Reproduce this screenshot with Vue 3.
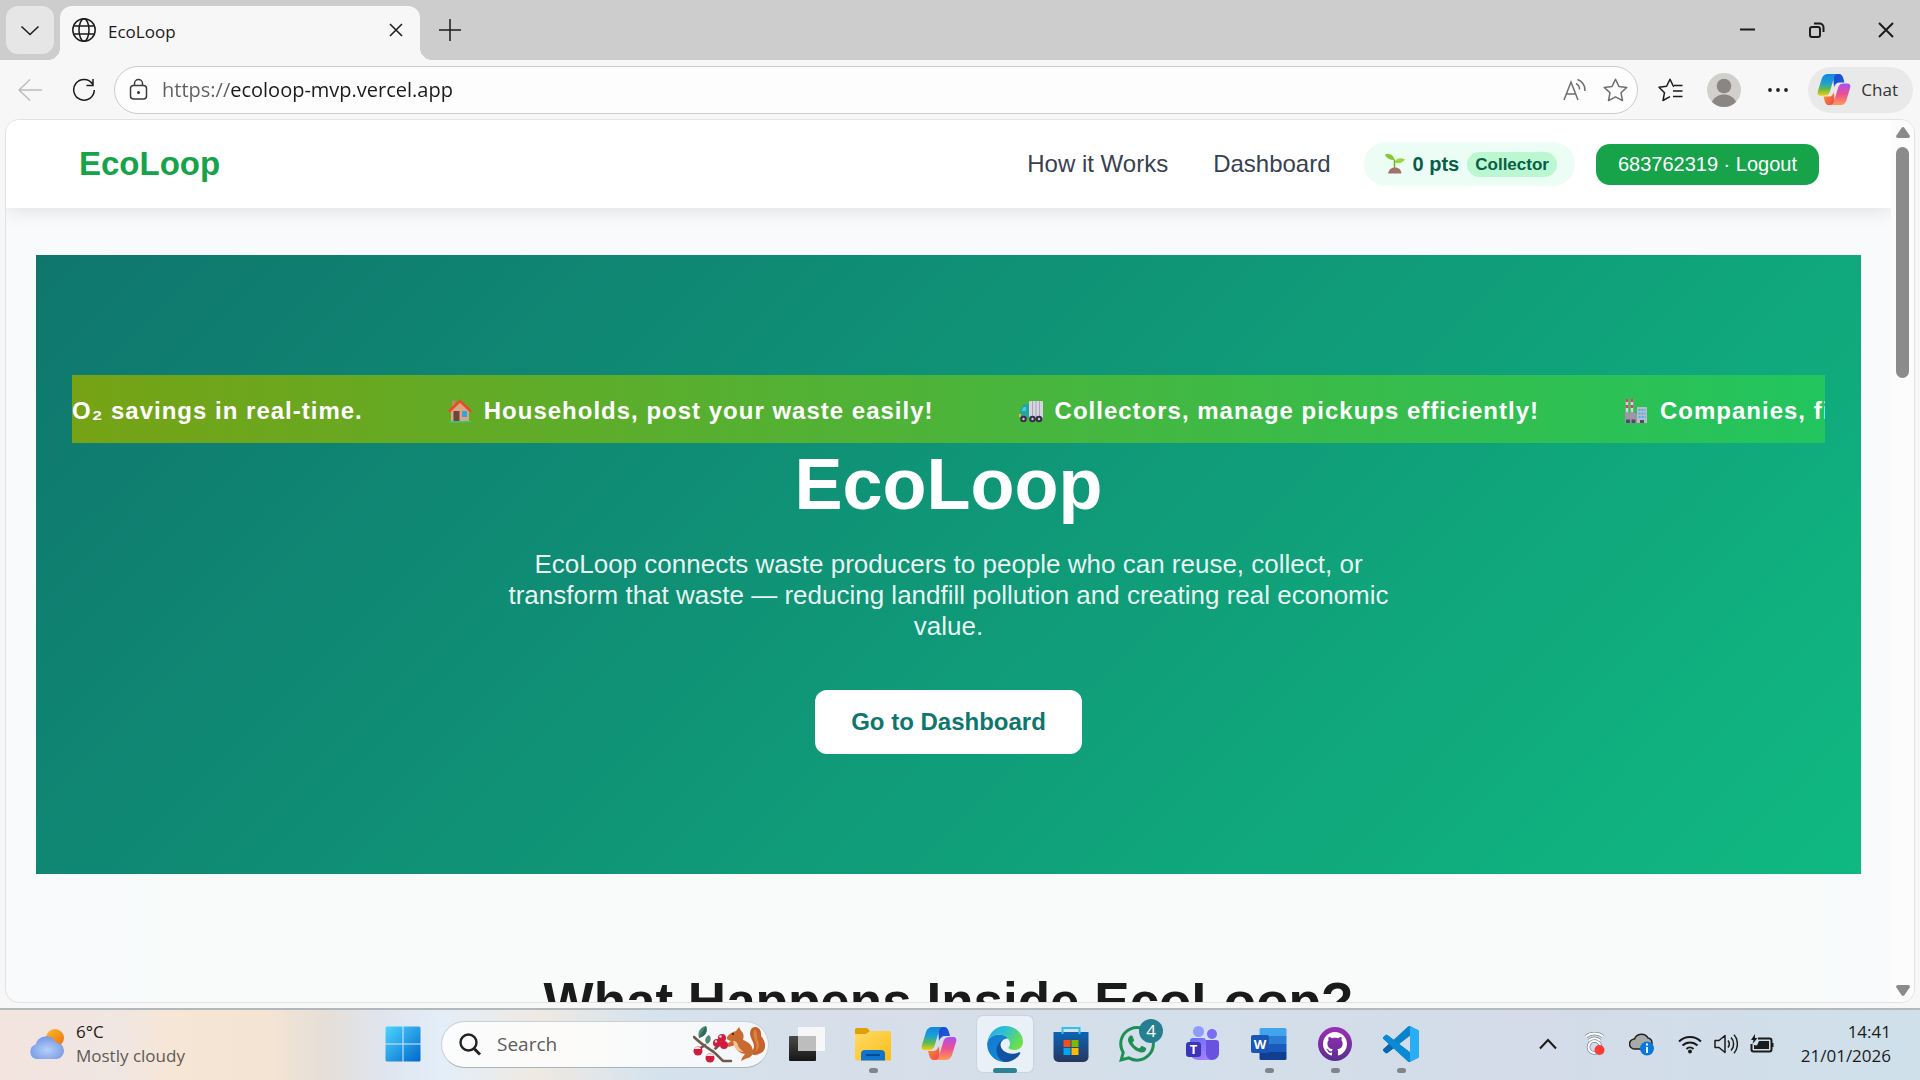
<script setup>
import { ref } from 'vue'

const url = ref('https://ecoloop-mvp.vercel.app')
const query = ref('')

const links = [
    { label: 'How it Works', href: '#how' },
    { label: 'Dashboard', href: '#dashboard' }
]

const apps = [
    { name: 'Task view', icon: 'taskview' },
    { name: 'File Explorer', icon: 'folder', running: true },
    { name: 'Copilot', icon: 'copilot' },
    { name: 'Edge', icon: 'edge', active: true },
    { name: 'Store', icon: 'store' },
    { name: 'WhatsApp', icon: 'whatsapp', badge: 4 },
    { name: 'Teams', icon: 'teams' },
    { name: 'Word', icon: 'word', running: true },
    { name: 'GitHub Desktop', icon: 'github', running: true },
    { name: 'VS Code', icon: 'vscode', running: true }
]
</script>

<template>
    <div class="desktop">
        <svg class="symbols" aria-hidden="true">
            <defs>
                <linearGradient id="g-cop-a" x1="0" y1="0" x2="0" y2="1">
                    <stop offset="0" stop-color="#1288e0" />
                    <stop offset=".4" stop-color="#1b9fd8" />
                    <stop offset=".7" stop-color="#5fba4b" />
                    <stop offset="1" stop-color="#f7cb12" />
                </linearGradient>
                <linearGradient id="g-cop-b" x1="0" y1="0" x2="0" y2="1">
                    <stop offset="0" stop-color="#a94ff0" />
                    <stop offset=".5" stop-color="#ee5091" />
                    <stop offset="1" stop-color="#ff9b52" />
                </linearGradient>
                <linearGradient id="g-cop-c" x1="0" y1="0" x2="1" y2="1">
                    <stop offset="0" stop-color="#1a49c8" />
                    <stop offset="1" stop-color="#1b5fe2" />
                </linearGradient>
                <linearGradient id="g-cop-d" x1="0" y1="0" x2="1" y2="1">
                    <stop offset="0" stop-color="#fb9a2b" />
                    <stop offset="1" stop-color="#ef3f4f" />
                </linearGradient>
                <linearGradient id="g-start" x1="0" y1="0" x2="1" y2="1">
                    <stop offset="0" stop-color="#4fd5ff" />
                    <stop offset="1" stop-color="#0067cc" />
                </linearGradient>
                <linearGradient id="g-dark" x1="0" y1="0" x2="0" y2="1">
                    <stop offset="0" stop-color="#4a4a4a" />
                    <stop offset="1" stop-color="#161616" />
                </linearGradient>
                <linearGradient id="g-folder" x1="0" y1="0" x2="1" y2="1">
                    <stop offset="0" stop-color="#ffdc6b" />
                    <stop offset="1" stop-color="#fcbc12" />
                </linearGradient>
                <linearGradient id="g-edge-a" x1="0" y1="0" x2="1" y2=".5">
                    <stop offset="0" stop-color="#2aa4e6" />
                    <stop offset=".5" stop-color="#2fc2cf" />
                    <stop offset="1" stop-color="#6be04a" />
                </linearGradient>
                <linearGradient id="g-edge-b" x1="0" y1="0" x2="1" y2="1">
                    <stop offset="0" stop-color="#1579c8" />
                    <stop offset="1" stop-color="#0f8fe8" />
                </linearGradient>
                <linearGradient id="g-store" x1="0" y1="0" x2="0" y2="1">
                    <stop offset="0" stop-color="#0a64b6" />
                    <stop offset="1" stop-color="#28365e" />
                </linearGradient>
                <linearGradient id="g-teams" x1="0" y1="0" x2="1" y2="1">
                    <stop offset="0" stop-color="#5b6cf0" />
                    <stop offset="1" stop-color="#b784ff" />
                </linearGradient>
                <linearGradient id="g-github" x1="0" y1="0" x2="0" y2="1">
                    <stop offset="0" stop-color="#9b2fb5" />
                    <stop offset="1" stop-color="#5a2d91" />
                </linearGradient>
                <linearGradient id="g-sun" x1="0" y1="0" x2="1" y2="1">
                    <stop offset="0" stop-color="#f5be2c" />
                    <stop offset="1" stop-color="#f26c0c" />
                </linearGradient>
                <radialGradient id="g-cloud" cx=".5" cy=".6" r=".6">
                    <stop offset="0" stop-color="#b6d0fa" />
                    <stop offset="1" stop-color="#7398e4" />
                </radialGradient>
            </defs>
            <symbol id="copilot" viewBox="0 0 36 36">
                <path fill="url(#g-cop-c)" d="M17 1H23c3 0 4 2 5 5l1 4h-5c-3 0-5 2-6 5z" />
                <path fill="url(#g-cop-d)" d="M19 34H13c-3 0-4-2-5-5l-1-4h5c3 0 5-2 6-5z" />
                <path fill="url(#g-cop-a)" d="M12 1H23c-3 0-4 1-5 4L13.500 20c-1 3-3 4-6 4H4C1 24 0 22 1 19L5 6C6 3 8 1 12 1z" />
                <path fill="url(#g-cop-b)" d="M24 34H13c3 0 4-1 5-4l4.500-15c1-3 3-4 6-4h3.500c3 0 4 2 3 5l-4 13c-1 3-3 5-7 5z" />
            </symbol>
        </svg>

        <div class="browser">
            <header class="tab-bar">
                <button class="tab-menu" aria-label="Tab actions">
                    <svg width="20" height="20" viewBox="0 0 20 20"><path class="line" d="M1.500 6.500l8.500 8 8.500-8" /></svg>
                </button>
                <div class="tab">
                    <svg width="24" height="24" viewBox="0 0 24 24">
                        <g class="line">
                            <circle cx="12" cy="12" r="11.200" />
                            <ellipse cx="12" cy="12" rx="5" ry="11.200" />
                            <path d="M1.500 8h21M1.500 16h21" />
                        </g>
                    </svg>
                    <span class="tab-title">EcoLoop</span>
                    <button class="plain" aria-label="Close tab">
                        <svg width="14" height="14" viewBox="0 0 14 14"><path class="line" d="M1 1l12 12M13 1L1 13" /></svg>
                    </button>
                </div>
                <button class="plain new-tab" aria-label="New tab">
                    <svg width="22" height="22" viewBox="0 0 22 22"><path class="line" d="M11 0v22M0 11h22" /></svg>
                </button>
                <div class="window-controls">
                    <button class="plain" aria-label="Minimize">
                        <svg width="16" height="16" viewBox="0 0 16 16"><path class="line bold" d="M0 7.500h15" /></svg>
                    </button>
                    <button class="plain" aria-label="Restore">
                        <svg width="16" height="16" viewBox="0 0 16 16">
                            <rect class="line bold" x="1" y="5" width="10" height="10" rx="2" />
                            <path class="line bold" d="M5 1.500h5.500a4 4 0 0 1 4 4V10" />
                        </svg>
                    </button>
                    <button class="plain" aria-label="Close">
                        <svg width="16" height="16" viewBox="0 0 16 16"><path class="line bold" d="M1 1l14 14M15 1L1 15" /></svg>
                    </button>
                </div>
            </header>

            <div class="toolbar">
                <button class="plain tool" aria-label="Back">
                    <svg width="24" height="24" viewBox="0 0 24 24"><path class="line pale" d="M24 12H1M12 1.500L1 12l11 10.500" /></svg>
                </button>
                <button class="plain tool reload" aria-label="Reload">
                    <svg width="24" height="24" viewBox="0 0 24 24"><path class="line" d="M20.500 6A10.300 10.300 0 1 0 22.300 12M21 1v6.500h-6.500" /></svg>
                </button>
                <form class="address" @submit.prevent>
                    <svg width="20" height="24" viewBox="0 0 20 24">
                        <g class="line soft">
                            <rect x="1.500" y="7.500" width="16" height="13.500" rx="3" />
                            <path d="M5.500 7.500V5.500a4 4 0 0 1 8 0v2" />
                        </g>
                        <circle cx="9.500" cy="14.500" r="1.500" fill="#333" />
                    </svg>
                    <input v-model="url" class="address-input" type="text" aria-label="Address">
                    <button class="plain" type="button" aria-label="Read aloud">
                        <svg width="24" height="24" viewBox="0 0 24 24"><path class="line grey" d="M1 22L8 4l7 18M3.500 16h9M13 5.500c2 1 3.500 3 3.500 6M14.500 1.500c4.500 1.500 8 6 7.500 11.500" /></svg>
                    </button>
                    <button class="plain" type="button" aria-label="Add to favorites">
                        <svg width="25" height="24" viewBox="0 0 25 24"><path class="line grey" stroke-linejoin="round" d="M12.500 1.200l3.400 7.200 7.900 1-5.800 5.400 1.500 7.800-7-3.800-7 3.800L7 14.800 1.200 9.400l7.900-1z" /></svg>
                    </button>
                </form>
                <button class="plain tool" aria-label="Favorites">
                    <svg width="25" height="24" viewBox="0 0 25 24">
                        <path class="line" stroke-linejoin="round" d="M16 8.400l-.6-.1L12 1.200 8.600 8.300l-7.600 1 5.500 5.400L5 22.500l7-3.800M16 7.500h8.500M15 13h9.500M15 18.500h9.500" />
                    </svg>
                </button>
                <button class="plain tool" aria-label="Profile">
                    <svg width="34" height="34" viewBox="0 0 34 34">
                        <circle cx="17" cy="17" r="17" fill="#d2d0cd" />
                        <circle cx="17" cy="13" r="7.300" fill="#8a8684" />
                        <path fill="#8a8684" d="M5 29c2-5 7-7.500 12-7.500S27 24 29 29a17 17 0 0 1-24 0z" />
                    </svg>
                </button>
                <button class="plain tool" aria-label="Settings and more">
                    <svg width="20" height="6" viewBox="0 0 20 6" fill="#222"><circle cx="2" cy="3" r="1.900" /><circle cx="10" cy="3" r="1.900" /><circle cx="18" cy="3" r="1.900" /></svg>
                </button>
                <button class="chat">
                    <svg width="34" height="34"><use href="#copilot" /></svg>
                    <span>Chat</span>
                </button>
            </div>

            <div class="viewport">
                <div class="page">
                    <nav class="navbar">
                        <a class="logo" href="#">EcoLoop</a>
                        <div class="nav-links">
                            <a v-for="link in links" :key="link.href" :href="link.href">{{ link.label }}</a>
                        </div>
                        <div class="points">
                            <svg width="20" height="20" viewBox="0 0 20 20">
                                <path fill="#a1716b" d="M3 19.500C4 15 7 13.500 10 13.500s6 1.500 6.500 6z" />
                                <path fill="none" stroke="#6fae2c" stroke-width="1.500" d="M9.500 14V5.500" />
                                <path fill="#86c935" d="M0 .5C5-1 9 1.500 9.500 6 5 6 1.500 4.500 0 .5z" />
                                <path fill="#9bd83f" d="M9.500 8.500C11 4.500 15 3 20 5.500c-2 3.500-7 4.500-10.500 3z" />
                            </svg>
                            <span>0 pts</span>
                            <span class="role">Collector</span>
                        </div>
                        <button class="logout">683762319 · Logout</button>
                    </nav>

                    <section class="hero">
                        <div class="marquee">
                            <span class="marquee-item">O₂ savings in real-time.</span>
                            <span class="marquee-item">
                                <svg width="24" height="24" viewBox="0 0 24 24">
                                    <path fill="#b98b63" d="M4 1.500h3.500V8H4z" />
                                    <path fill="#dca57c" d="M3 10l9-8 9 8v12H3z" />
                                    <path fill="none" stroke="#e8492f" stroke-width="2.500" stroke-linecap="round" d="M1.500 12L12 2l10.500 10" />
                                    <rect x="5.500" y="12" width="6" height="10" fill="#6d4540" />
                                    <rect x="14" y="12" width="5" height="6" fill="#2ea5e8" />
                                    <path fill="#35c68b" d="M1 22h22v1.500H1z" />
                                </svg>
                                Households, post your waste easily!
                            </span>
                            <span class="marquee-item">
                                <svg width="24" height="24" viewBox="0 0 24 24">
                                    <rect x="10" y="2" width="14" height="17" rx="1" fill="#d7d3df" />
                                    <path stroke="#a9a4b7" d="M13.500 2v16M17 2v16M20.500 2v16" />
                                    <path fill="#26a69a" d="M2 9l3-4h5v14H1v-6z" />
                                    <path fill="#44c8ef" d="M2.500 12l2-4H7v4z" />
                                    <path fill="#e9b93b" d="M0 15h2v3H0z" />
                                    <g fill="#3a2f4a"><circle cx="4.500" cy="20" r="3.300" /><circle cx="13.500" cy="20" r="3.300" /><circle cx="20" cy="20" r="3.300" /></g>
                                    <g fill="#c8c3d4"><circle cx="4.500" cy="20" r="1.200" /><circle cx="13.500" cy="20" r="1.200" /><circle cx="20" cy="20" r="1.200" /></g>
                                </svg>
                                Collectors, manage pickups efficiently!
                            </span>
                            <span class="marquee-item">
                                <svg width="24" height="24" viewBox="0 0 24 24">
                                    <path stroke="#d9d5e0" stroke-width="2.500" d="M3 0v14M8 0v14" />
                                    <path stroke="#e03a6c" stroke-width="2.500" stroke-dasharray="3 3" d="M3 0v12M8 0v12" />
                                    <path fill="#9c97a8" d="M1 12l5 2.500V12l7 3v9H1z" />
                                    <rect x="13" y="8" width="10" height="16" fill="#bdb9c8" />
                                    <path stroke="#3fb7f0" stroke-width="2" stroke-dasharray="2 1" d="M14.500 11h7M14.500 14.500h7M14.500 18h7" />
                                    <path fill="#52485f" d="M2 20.500h4V24H2zM7.500 20.500h4V24h-4zM16 21h4v3h-4z" />
                                </svg>
                                Companies, fi
                            </span>
                        </div>
                        <h1>EcoLoop</h1>
                        <p>EcoLoop connects waste producers to people who can reuse, collect, or transform that waste — reducing landfill pollution and creating real economic value.</p>
                        <button class="cta">Go to Dashboard</button>
                    </section>

                    <section class="inside">
                        <h2>What Happens Inside EcoLoop?</h2>
                    </section>
                </div>
                <div class="scrollbar" aria-hidden="true">
                    <svg width="14" height="11" viewBox="0 0 14 11"><path fill="#8b8b8b" d="M5.500 1Q7-1 8.500 1L14 9q0 2-2 2H2Q0 11 0 9z" /></svg>
                    <div class="thumb"></div>
                    <svg class="arrow-down" width="14" height="11" viewBox="0 0 14 11"><path fill="#8b8b8b" d="M5.500 10Q7 12 8.500 10L14 2q0-2-2-2H2Q0 0 0 2z" /></svg>
                </div>
            </div>
        </div>

        <footer class="taskbar">
            <div class="weather">
                <svg width="36" height="32" viewBox="0 0 36 32">
                    <circle cx="26" cy="10" r="9" fill="url(#g-sun)" />
                    <path fill="url(#g-cloud)" d="M7.500 31A7.500 7.500 0 0 1 6.500 16.500 11 11 0 0 1 27 14.500a8.300 8.300 0 0 1 1 16.500z" />
                </svg>
                <div class="weather-text">
                    <span>6°C</span>
                    <span class="muted">Mostly cloudy</span>
                </div>
            </div>

            <button class="task" aria-label="Start">
                <svg width="36" height="36" viewBox="0 0 36 36"><path fill="url(#g-start)" d="M2 .5h15.500v17H.5V2A1.500 1.500 0 0 1 2 .5zM18.500.5H34A1.500 1.500 0 0 1 35.500 2v15.500h-17zM.5 18.500h17v17H2A1.500 1.500 0 0 1 .5 34zM18.500 18.500h17V34a1.500 1.500 0 0 1-1.500 1.500H18.500z" /></svg>
            </button>

            <label class="search">
                <svg width="22" height="23" viewBox="0 0 22 23"><g fill="none" stroke="#222" stroke-width="2.400"><circle cx="9.500" cy="9.500" r="8" /><path stroke-width="3" d="M15.500 16l5.500 5.500" /></g></svg>
                <input v-model="query" type="text" placeholder="Search" aria-label="Search">
                <svg width="72" height="38" viewBox="0 0 72 38">
                    <path fill="none" stroke="#6f5a4c" stroke-width="2.500" stroke-linecap="round" d="M1 12c7 7 14 11 21 16l8 8h8M12 20l-7 5M20 26l6-6" />
                    <path fill="none" stroke="#f1f4f8" stroke-width="1.500" d="M13 18l11 9 8 6" />
                    <path fill="#4f8a72" d="M6 13C4 6 8 2 13 1c2 5 0 10-7 12zM14 19c-3-3-2-7 2-9 3 3 2 7-2 9z" />
                    <path fill="#2f6b57" d="M6 13c2-4 4-8 7-12 2 5 0 10-7 12z" />
                    <path fill="#c4622a" d="M59 3c5-3 10 1 9 8 5 6 6 13 0 17-5 3-9 2-12 0 5-2 6-6 4-11-2-4-5-9-1-14z" />
                    <path fill="#dd8442" d="M62 4c3 4 1 8 3 12 2 5 1 8-3 11 2-4 2-8 0-12-2-5-2-8 0-11z" />
                    <path fill="#c96a30" d="M43 6l3-4 2 4c3 2 3 6 2 9 6 2 10 6 10 12 0 4-4 6-8 7l-4 2 1-3 3-4c-6-1-9-4-10-9l-6 2-3-2 5-4c-2-1-5-1-4-4 2-3 5-5 9-6z" />
                    <path fill="#f0c494" d="M40 16c3 0 5 2 5 5 2 3 4 5 6 6-6 0-9-3-10-7z" />
                    <circle cx="40" cy="9" r="1" fill="#2a1610" />
                    <g fill="#cf1c3c"><circle cx="29" cy="13" r="4" /><circle cx="24" cy="18" r="4" /><circle cx="31" cy="20" r="4" /><circle cx="5" cy="26" r="4.500" /><circle cx="17" cy="33" r="4.500" /></g>
                    <g fill="#f6dfe6"><circle cx="27.500" cy="11.500" r="1.200" /><circle cx="23" cy="16.500" r="1.200" /><path d="M1 24c1-3 6-3 7 0zM13 31c1-3 7-3 8 0z" /></g>
                </svg>
            </label>

            <button v-for="app in apps" :key="app.icon" class="task" :class="{ active: app.active, running: app.running }" :aria-label="app.name">
                <svg v-if="app.icon === 'taskview'" width="36" height="36" viewBox="0 0 36 36">
                    <rect y="10" width="27" height="25" rx="1" fill="url(#g-dark)" />
                    <rect x="9" y="1" width="27" height="24" rx="1" fill="#f7f7f7" />
                    <path fill="#bdbdbd" d="M9 10h18v15H10a1 1 0 0 1-1-1z" />
                </svg>
                <svg v-else-if="app.icon === 'folder'" width="36" height="36" viewBox="0 0 36 36">
                    <path fill="#e0a009" d="M1.500 2H12l3 3v4H0V3.500A1.500 1.500 0 0 1 1.500 2z" />
                    <path fill="url(#g-folder)" d="M0 8h11l4-3h19.500A1.500 1.500 0 0 1 36 6.500V33a1.500 1.500 0 0 1-1.500 1.500h-33A1.500 1.500 0 0 1 0 33z" />
                    <path fill="#0f74cc" d="M6 34.500V28a4 4 0 0 1 4-4h16a4 4 0 0 1 4 4v6.500z" />
                    <path stroke="#0a4a8c" stroke-width="2" d="M11 29h14" />
                </svg>
                <svg v-else-if="app.icon === 'copilot'" width="36" height="36"><use href="#copilot" /></svg>
                <svg v-else-if="app.icon === 'edge'" width="36" height="36" viewBox="0 0 36 36">
                    <path fill="url(#g-edge-b)" d="M.2 17C1.500 12 6 8.500 12 8.500c4 0 7.500 1.500 9.500 4C16 12 13 16 13 20c0 7 6 10 13 10-2 4-6 6-9 6C8 35.500-.5 28 .2 17z" />
                    <path fill="#1153a0" d="M17 13.500C12.500 15 9.500 19 9.500 24c0 6 4 11.500 9 12 6 0 11.500-3 14.700-8.500.6-1-.3-1.700-1.300-1.200-2 1-4 1.500-6.400 1.500-7 0-12-4.500-12-9.300 0-2.200 1.500-4 3.500-5z" />
                    <path fill="url(#g-edge-a)" d="M.2 17C1.500 7 9 0 18 0c10.500 0 18 7.500 18 15.500C36 21 32 24 27.500 24c-4 0-6-1.200-6-2.200 0-.8 1.500-1.800 1.500-4.300 0-4.500-5-9-11-9S1.500 12.500.2 17z" />
                </svg>
                <svg v-else-if="app.icon === 'store'" width="36" height="36" viewBox="0 0 36 36">
                    <path fill="url(#g-store)" d="M.5 6h35v25a5 5 0 0 1-5 5h-25a5 5 0 0 1-5-5z" />
                    <path fill="none" stroke="#2cc3f2" stroke-width="2" d="M9.500 8V2h17v6" />
                    <path fill="#f25022" d="M10.500 14h7v7h-7z" />
                    <path fill="#7fba00" d="M18.500 14h7v7h-7z" />
                    <path fill="#00a4ef" d="M10.500 22h7v7h-7z" />
                    <path fill="#ffb900" d="M18.500 22h7v7h-7z" />
                </svg>
                <svg v-else-if="app.icon === 'whatsapp'" width="36" height="36" viewBox="0 0 24 24">
                    <path fill="#1f8f55" d="M17.472 14.382c-.297-.149-1.758-.867-2.030-.967-.273-.099-.471-.148-.67.15-.197.297-.767.966-.94 1.164-.173.199-.347.223-.644.075-.297-.15-1.255-.463-2.390-1.475-.883-.788-1.480-1.761-1.653-2.059-.173-.297-.018-.458.13-.606.134-.133.298-.347.446-.52.149-.174.198-.298.298-.497.099-.198.05-.371-.025-.52-.075-.149-.669-1.612-.916-2.207-.242-.579-.487-.5-.669-.51-.173-.008-.371-.01-.57-.01-.198 0-.52.074-.792.372-.272.297-1.040 1.016-1.040 2.479 0 1.462 1.065 2.875 1.213 3.074.149.198 2.096 3.200 5.077 4.487.709.306 1.262.489 1.694.625.712.227 1.360.195 1.871.118.571-.085 1.758-.719 2.006-1.413.248-.694.248-1.289.173-1.413-.074-.124-.272-.198-.57-.347m-5.421 7.403h-.004a9.870 9.870 0 0 1-5.031-1.378l-.361-.214-3.741.982.998-3.648-.235-.374a9.860 9.860 0 0 1-1.510-5.260c.001-5.450 4.436-9.884 9.888-9.884 2.640 0 5.122 1.030 6.988 2.898a9.825 9.825 0 0 1 2.893 6.994c-.003 5.450-4.437 9.884-9.885 9.884m8.413-18.297A11.815 11.815 0 0 0 12.050 0C5.495 0 .16 5.335.157 11.892c0 2.096.547 4.142 1.588 5.945L.057 24l6.305-1.654a11.882 11.882 0 0 0 5.683 1.448h.005c6.554 0 11.890-5.335 11.893-11.893a11.821 11.821 0 0 0-3.480-8.413z" />
                </svg>
                <svg v-else-if="app.icon === 'teams'" width="36" height="36" viewBox="0 0 36 36">
                    <circle cx="27" cy="8" r="5" fill="#7a6cf5" />
                    <circle cx="13.500" cy="5.500" r="5.500" fill="#8f9bff" />
                    <path fill="#6a52e0" d="M20 14h11a3 3 0 0 1 3 3v10c0 4-3 7-7 7h-7z" />
                    <path fill="url(#g-teams)" d="M8 12h10a3 3 0 0 1 3 3v12c0 3 2 7 6 7H14c-5 0-9-3-9-8V15a3 3 0 0 1 3-3z" />
                    <rect x="1" y="16" width="15" height="15" rx="3" fill="#3d35b8" />
                    <text x="8.500" y="28" class="app-letter">T</text>
                </svg>
                <svg v-else-if="app.icon === 'word'" width="36" height="36" viewBox="0 0 36 36">
                    <path fill="#41a5ee" d="M10 2h24a1.500 1.500 0 0 1 1.500 1.500V10h-27V3.500A1.500 1.500 0 0 1 10 2z" />
                    <path fill="#2b7cd3" d="M8.500 10h27v8h-27z" />
                    <path fill="#185abd" d="M8.500 18h27v8h-27z" />
                    <path fill="#103f91" d="M8.500 26h27v6.500A1.500 1.500 0 0 1 34 34H10a1.500 1.500 0 0 1-1.500-1.500z" />
                    <rect y="9" width="18" height="18" rx="2" fill="#1a55b8" />
                    <text x="9" y="23" class="app-letter">W</text>
                </svg>
                <svg v-else-if="app.icon === 'github'" width="36" height="36" viewBox="0 0 36 36">
                    <circle cx="18" cy="18" r="17" fill="url(#g-github)" />
                    <path fill="#fff" transform="translate(6 6) scale(1.500)" d="M8 0C3.580 0 0 3.580 0 8c0 3.540 2.290 6.530 5.470 7.590.4.07.55-.17.55-.38 0-.19-.01-.82-.01-1.490-2.010.37-2.530-.49-2.690-.94-.09-.23-.48-.94-.82-1.130-.28-.15-.68-.52-.01-.53.63-.01 1.080.58 1.230.82.72 1.210 1.870.87 2.330.66.07-.52.28-.87.51-1.070-1.780-.2-3.640-.89-3.640-3.950 0-.87.31-1.590.82-2.150-.08-.2-.36-1.020.08-2.120 0 0 .67-.21 2.200.82.64-.18 1.320-.27 2-.27s1.360.09 2 .27c1.530-1.040 2.200-.82 2.200-.82.44 1.100.16 1.920.08 2.120.51.56.82 1.270.82 2.150 0 3.070-1.870 3.750-3.650 3.950.29.25.54.73.54 1.480 0 1.070-.01 1.930-.01 2.200 0 .21.15.46.55.38A8.010 8.010 0 0 0 16 8c0-4.420-3.580-8-8-8z" />
                </svg>
                <svg v-else width="36" height="36" viewBox="0 0 24 24">
                    <path fill="#0a83cd" d="M23.150 2.587L18.210.21a1.494 1.494 0 0 0-1.705.29l-9.460 8.630-4.120-3.128a.999.999 0 0 0-1.276.057L.327 7.261A1 1 0 0 0 .326 8.740L3.899 12 .326 15.260a1 1 0 0 0 .001 1.479L1.650 17.940a.999.999 0 0 0 1.276.057l4.120-3.128 9.460 8.630a1.492 1.492 0 0 0 1.704.29l4.942-2.377A1.500 1.500 0 0 0 24 20.060V3.939a1.500 1.500 0 0 0-.85-1.352zm-5.146 14.861L10.826 12l7.178-5.448v10.896z" />
                    <path fill="#29aef5" d="M18 .2l5.150 2.387A1.500 1.500 0 0 1 24 3.940v16.120a1.500 1.500 0 0 1-.85 1.352L18 23.800z" />
                    <path fill="#0668ab" d="M.33 15.260L7.050 9.130l3.780 2.870-7.900 6a1 1 0 0 1-1.280-.06L.33 16.740a1 1 0 0 1 0-1.480z" />
                    <path fill="#0a8ad6" d="M.33 8.740a1 1 0 0 1 0-1.480L1.650 6.060a1 1 0 0 1 1.280-.06l15.070 11.450v6.350a1.500 1.500 0 0 1-1.500-.3z" />
                </svg>
                <span v-if="app.badge" class="badge">{{ app.badge }}</span>
            </button>

            <div class="tray">
                <button class="plain overflow" aria-label="Show hidden icons">
                    <svg width="18" height="12" viewBox="0 0 18 12"><path class="line bold" d="M1 10.500l8-8.500 8 8.500" /></svg>
                </button>
                <svg width="20" height="24" viewBox="0 0 20 24">
                    <g fill="none" stroke="#7b8794" stroke-width="3.500"><path d="M1 4.500c5-4 12-4 17 0" /><path d="M4 8.500c3-3 8-3 11 0" /><circle cx="9.500" cy="15" r="6" /></g>
                    <g fill="none" stroke="#fff" stroke-width="2"><path d="M1 4.500c5-4 12-4 17 0" /><path d="M4 8.500c3-3 8-3 11 0" /><circle cx="9.500" cy="15" r="6" /></g>
                    <circle cx="14.500" cy="18" r="5" fill="#fb3b35" />
                </svg>
                <svg width="25" height="24" viewBox="0 0 25 24">
                    <path fill="#a9a9a9" stroke="#222" stroke-width="1.500" d="M5.500 17A5 5 0 0 1 5.500 7 7.500 7.500 0 0 1 19 6c3 .5 4 3 4 5.500 0 3-2 5.500-4 5.500z" />
                    <circle cx="18" cy="16.500" r="7" fill="#0a78d6" />
                    <path stroke="#fff" stroke-width="2" d="M18 15v6M18 11.500v2" />
                </svg>
                <button class="status" aria-label="Network, volume and battery">
                    <svg width="24" height="20" viewBox="0 0 24 20">
                        <path class="line bold" d="M1 7.500a15.500 15.500 0 0 1 22 0M4.500 11.500a10.600 10.600 0 0 1 15 0M8.500 15a5 5 0 0 1 7 0" />
                        <circle cx="12" cy="17.500" r="2" fill="#1b1b1b" />
                    </svg>
                    <svg width="24" height="20" viewBox="0 0 24 20"><path class="line" stroke-linejoin="round" d="M1 6.500h4l6-5v17l-6-5H1zM14 6.500c1.500 2 1.500 5 0 7M17 3.500c3.500 3.500 3.500 9.500 0 13M20 .8c4.500 5 4.500 13.400 0 18.400" /></svg>
                    <svg width="25" height="20" viewBox="0 0 25 20">
                        <path class="line bold" d="M8 4.500h11.500a2 2 0 0 1 2 2v9a2 2 0 0 1-2 2h-16a2 2 0 0 1-2-2V10M22.500 9v4" />
                        <path fill="#1b1b1b" d="M9 7h10v8H4v-4l3 .5zM5 0L1 6h2.500L2.500 10 7.500 4H5z" />
                    </svg>
                </button>
                <div class="clock">
                    <time>14:41</time>
                    <time>21/01/2026</time>
                </div>
            </div>
        </footer>
    </div>
</template>

<style>
body {
    margin: 0;
}
</style>

<style scoped>
.desktop {
    height: 100vh;
    display: flex;
    flex-direction: column;
    overflow: hidden;
    font-family: "Open Sans", "Noto Sans", sans-serif;
    font-size: 17px;
    color: #1b1b1b;
}

.desktop * {
    box-sizing: border-box;
}

.symbols {
    position: absolute;
    width: 0;
    height: 0;
}

svg {
    display: block;
    flex-shrink: 0;
}

button {
    font: inherit;
    color: inherit;
    border: 0;
    padding: 0;
    display: flex;
    align-items: center;
    justify-content: center;
}

.plain,
.status {
    background: none;
}

.line {
    fill: none;
    stroke: #1b1b1b;
    stroke-width: 1.5;
}

.line.bold {
    stroke-width: 2;
}

.line.pale {
    stroke: #bcbcbc;
}

.line.soft {
    stroke: #3c3c3c;
}

.line.grey {
    stroke: #6e6e6e;
}

.browser {
    flex: 1;
    min-height: 0;
    display: flex;
    flex-direction: column;
    background: #f7f7f7;
}

/* tab strip */
.tab-bar {
    height: 60px;
    display: flex;
    align-items: center;
    padding-left: 6px;
    background: #cdcdcd;
}

.tab-menu {
    width: 48px;
    height: 48px;
    border-radius: 12px;
    background: #e6e6e6;
}

.tab {
    position: relative;
    width: 360px;
    height: 54px;
    margin-left: 6px;
    padding: 0 17px 6px 12px;
    display: flex;
    align-items: center;
    align-self: flex-end;
    gap: 12px;
    border-radius: 12px 12px 0 0;
    background: #f7f7f7;
}

.tab::before,
.tab::after {
    content: "";
    position: absolute;
    bottom: 0;
    width: 12px;
    height: 12px;
}

.tab::before {
    right: 100%;
    background: radial-gradient(circle at 0 0, transparent 12px, #f7f7f7 12px);
}

.tab::after {
    left: 100%;
    background: radial-gradient(circle at 100% 0, transparent 12px, #f7f7f7 12px);
}

.tab-title {
    flex: 1;
    padding-top: 2px;
}

.new-tab {
    margin-left: 19px;
}

.window-controls {
    margin-left: auto;
    display: flex;
}

.window-controls button {
    width: 69px;
    height: 60px;
}

/* toolbar */
.toolbar {
    height: 59px;
    padding: 0 7px 0 12px;
    display: flex;
    align-items: center;
}

.tool {
    width: 36px;
    height: 36px;
    margin-right: 18px;
}

.tool.reload {
    margin-right: 12px;
}

.address {
    flex: 1;
    height: 48px;
    margin-right: 14px;
    padding: 0 9px 0 14px;
    display: flex;
    align-items: center;
    gap: 16px;
    border: 1px solid #cbcbcb;
    border-radius: 24px;
    background: #fdfdfd;
}

.address-input {
    flex: 1;
    min-width: 0;
    height: 32px;
    padding: 0;
    margin-left: -3px;
    border: 0;
    outline: 0;
    font: inherit;
    font-size: 20px;
    color: transparent;
    background: linear-gradient(90deg, #5f5f5f 68px, #1b1b1b 68px);
    background-clip: text;
}

.chat {
    height: 46px;
    margin-left: -6px;
    padding: 0 15px 0 9px;
    gap: 10px;
    border-radius: 23px;
    background: #e9e9e9;
    color: #333;
}

/* page */
.viewport {
    flex: 1;
    min-height: 0;
    margin: 0 5px 5px;
    display: flex;
    overflow: hidden;
    border: 1px solid #e2e2e2;
    border-radius: 14px;
    background: #f8fafc;
}

.page {
    flex: 1;
    min-width: 0;
    overflow: hidden;
    font-family: "Liberation Sans", Arial, sans-serif;
}

.page a {
    text-decoration: none;
}

.navbar {
    position: relative;
    height: 88px;
    padding: 0 72px 0 73px;
    display: flex;
    align-items: center;
    background: #fff;
    box-shadow: 0 3px 18px rgba(0, 0, 0, 0.1);
}

.logo {
    margin-right: auto;
    font-size: 33px;
    font-weight: bold;
    color: #16a34a;
}

.nav-links {
    display: flex;
    gap: 45px;
    margin-right: 33px;
    font-size: 24px;
}

.nav-links a {
    color: #374151;
}

.points {
    height: 44px;
    margin-right: 21px;
    padding: 0 18px 0 21px;
    display: flex;
    align-items: center;
    gap: 8px;
    border-radius: 22px;
    background: #ecfdf5;
    font-size: 20px;
    font-weight: bold;
    color: #065f46;
}

.role {
    padding: 0 8px;
    border-radius: 13px;
    background: #bbf7d0;
    font-size: 17px;
    line-height: 25px;
}

.logout {
    height: 41px;
    padding: 0 22px;
    border-radius: 14px;
    background: #16a34a;
    font-size: 20px;
    color: #fff;
}

.hero {
    margin: 47px 30px 0;
    padding: 120px 36px;
    display: flex;
    flex-direction: column;
    align-items: center;
    background: linear-gradient(135deg, #0f766e, #10b981);
    color: #fff;
    text-align: center;
}

.marquee {
    align-self: stretch;
    height: 68px;
    padding-top: 4px;
    display: flex;
    align-items: center;
    gap: 85px;
    overflow: hidden;
    background: linear-gradient(90deg, #76a315, #22c55e);
    font-size: 24px;
    font-weight: bold;
    letter-spacing: 1px;
    white-space: nowrap;
}

.marquee-item {
    display: flex;
    flex-shrink: 0;
    align-items: center;
    gap: 12px;
}

.hero h1 {
    margin: 0;
    font-size: 72px;
    line-height: 82px;
}

.hero p {
    max-width: 900px;
    margin: 24px 0 48px;
    font-size: 26px;
    line-height: 31px;
    color: rgba(255, 255, 255, 0.92);
}

.cta {
    height: 64px;
    padding: 0 36px;
    border-radius: 12px;
    background: #fff;
    font-size: 24px;
    font-weight: bold;
    color: #0f766e;
}

.inside {
    margin: 0 30px;
    padding-top: 97px;
    background: linear-gradient(90deg, #f8fafc, #f8fbf9 12%, #f8fbf9 96%, #f8fafc);
    text-align: center;
}

.inside h2 {
    margin: 0;
    font-size: 53px;
    line-height: 61px;
    color: #1a1a1a;
}

.scrollbar {
    width: 23px;
    padding: 7px 0 6px;
    display: flex;
    flex-direction: column;
    align-items: center;
    background: #fcfcfc;
}

.thumb {
    width: 13px;
    height: 231px;
    margin-top: 9px;
    border-radius: 7px;
    background: #8b8b8b;
}

.arrow-down {
    margin-top: auto;
}

/* taskbar */
.taskbar {
    height: 72px;
    padding: 0 29px 2px 29px;
    display: flex;
    align-items: center;
    gap: 10px;
    border-top: 2px solid #b2b8bc;
    background: linear-gradient(90deg, #f3e4df, #f0e6e2 6%, #f6e6d6 9%, #f4e4d4 14%, #e5dfd8 17%, #dfe5ef 20%, #e3eef8 23%, #efe9e2 28%, #d5e3ee 34%, #d6dee9 44%, #d3dfea 60%, #d3dce8 80%, #cfe0ea);
}

.weather {
    width: 336px;
    display: flex;
    align-items: center;
    gap: 11px;
    line-height: 24px;
}

.weather-text,
.clock {
    display: flex;
    flex-direction: column;
}

.muted {
    color: #5e5a57;
}

.task {
    position: relative;
    width: 56px;
    height: 56px;
    border-radius: 6px;
    background: none;
}

.task.active {
    background: #eaf0f7;
    box-shadow: 0 0 1px 1px #c9d3de;
}

.task.active::after,
.task.running::after {
    content: "";
    position: absolute;
    bottom: -1px;
    width: 9px;
    height: 5px;
    border-radius: 3px;
    background: #7f858b;
}

.task.active::after {
    width: 24px;
    background: #2a8494;
}

.app-letter {
    fill: #fff;
    font-size: 13px;
    font-weight: bold;
    text-anchor: middle;
}

.badge {
    position: absolute;
    top: 3px;
    right: 2px;
    width: 24px;
    border-radius: 50%;
    background: #267f8f;
    color: #fff;
    line-height: 24px;
}

.search {
    width: 328px;
    height: 47px;
    padding: 0 3px 0 17px;
    display: flex;
    align-items: center;
    gap: 16px;
    border: 1px solid #c9d0d6;
    border-bottom-color: #aab3ba;
    border-radius: 24px;
    background: linear-gradient(90deg, #fbfcfd, #fcfbf9 35%, #f3f7fb);
}

.search input {
    flex: 1;
    min-width: 0;
    padding: 0;
    border: 0;
    outline: 0;
    background: none;
    font: inherit;
    font-size: 19px;
}

.search input::placeholder {
    color: #5c5c5c;
    opacity: 1;
}

.tray {
    margin-left: auto;
    display: flex;
    align-items: center;
    gap: 24px;
}

.overflow {
    margin-right: 4px;
}

.status {
    gap: 12px;
}

.clock {
    margin-left: 2px;
    text-align: right;
    line-height: 24px;
}
</style>
